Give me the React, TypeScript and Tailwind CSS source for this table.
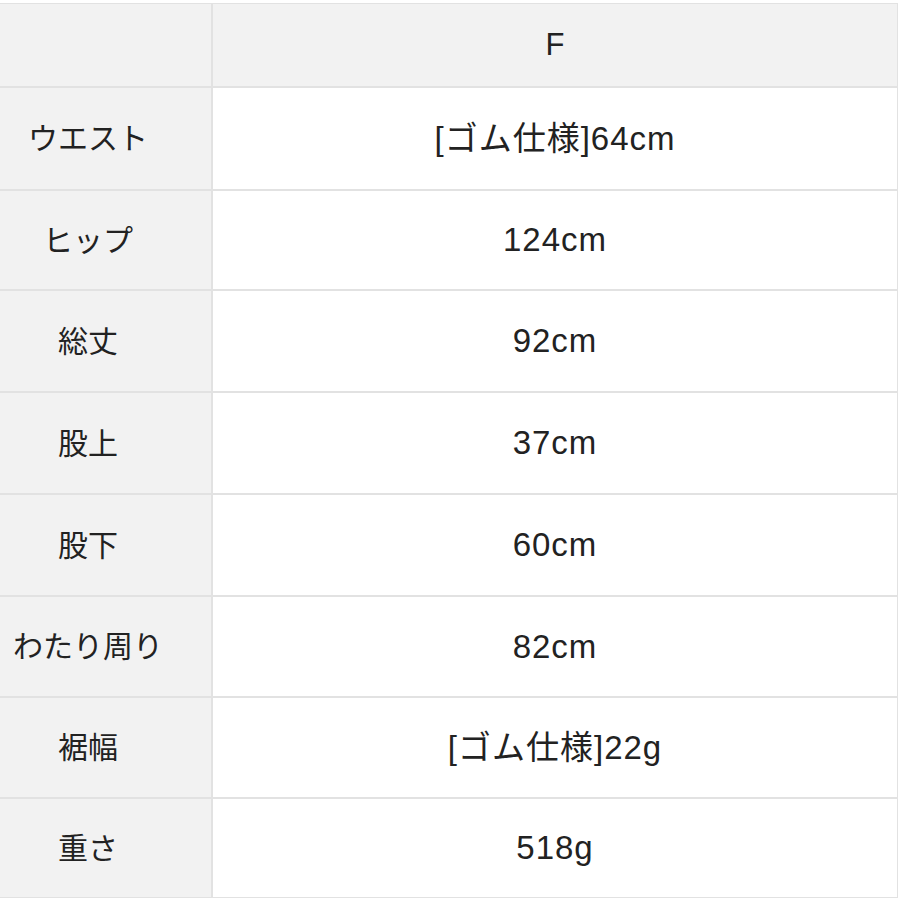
import React from "react";

const rows: [string, string, string][] = [
  ["ウエスト", "[ゴム仕様]64cm", "h-[101px]"],
  ["ヒップ", "124cm", "h-[98px]"],
  ["総丈", "92cm", "h-[100px]"],
  ["股上", "37cm", "h-[100px]"],
  ["股下", "60cm", "h-[100px]"],
  ["わたり周り", "82cm", "h-[99px]"],
  ["裾幅", "[ゴム仕様]22g", "h-[99px]"],
  ["重さ", "518g", "h-[98px]"],
];

export default function App() {
  return (
    <div
      className="w-[900px] h-[900px] bg-white pt-[3px] overflow-hidden text-[#222222]"
      style={{ fontFamily: '"Liberation Sans", "Noto Sans CJK JP", sans-serif' }}
    >
      <div className="w-[898px] bg-[#e2e2e2] p-[1px] pl-0 grid grid-cols-[211px_1fr] gap-[2px]">
        <div className="h-[82px] bg-[#f2f2f2]" />
        <div className="h-[82px] bg-[#f2f2f2] flex items-center justify-center text-[31px] font-normal">F</div>
        {rows.map(([k, v, h]) => (
          <React.Fragment key={k}>
            <div className={`${h} bg-[#f2f2f2] flex items-center justify-center pr-[35px] text-[30px] font-normal whitespace-nowrap`}>
              {k}
            </div>
            <div className={`${h} bg-white flex items-center justify-center text-[33px] tracking-[1px] font-normal whitespace-nowrap`}>
              {v}
            </div>
          </React.Fragment>
        ))}
      </div>
    </div>
  );
}
